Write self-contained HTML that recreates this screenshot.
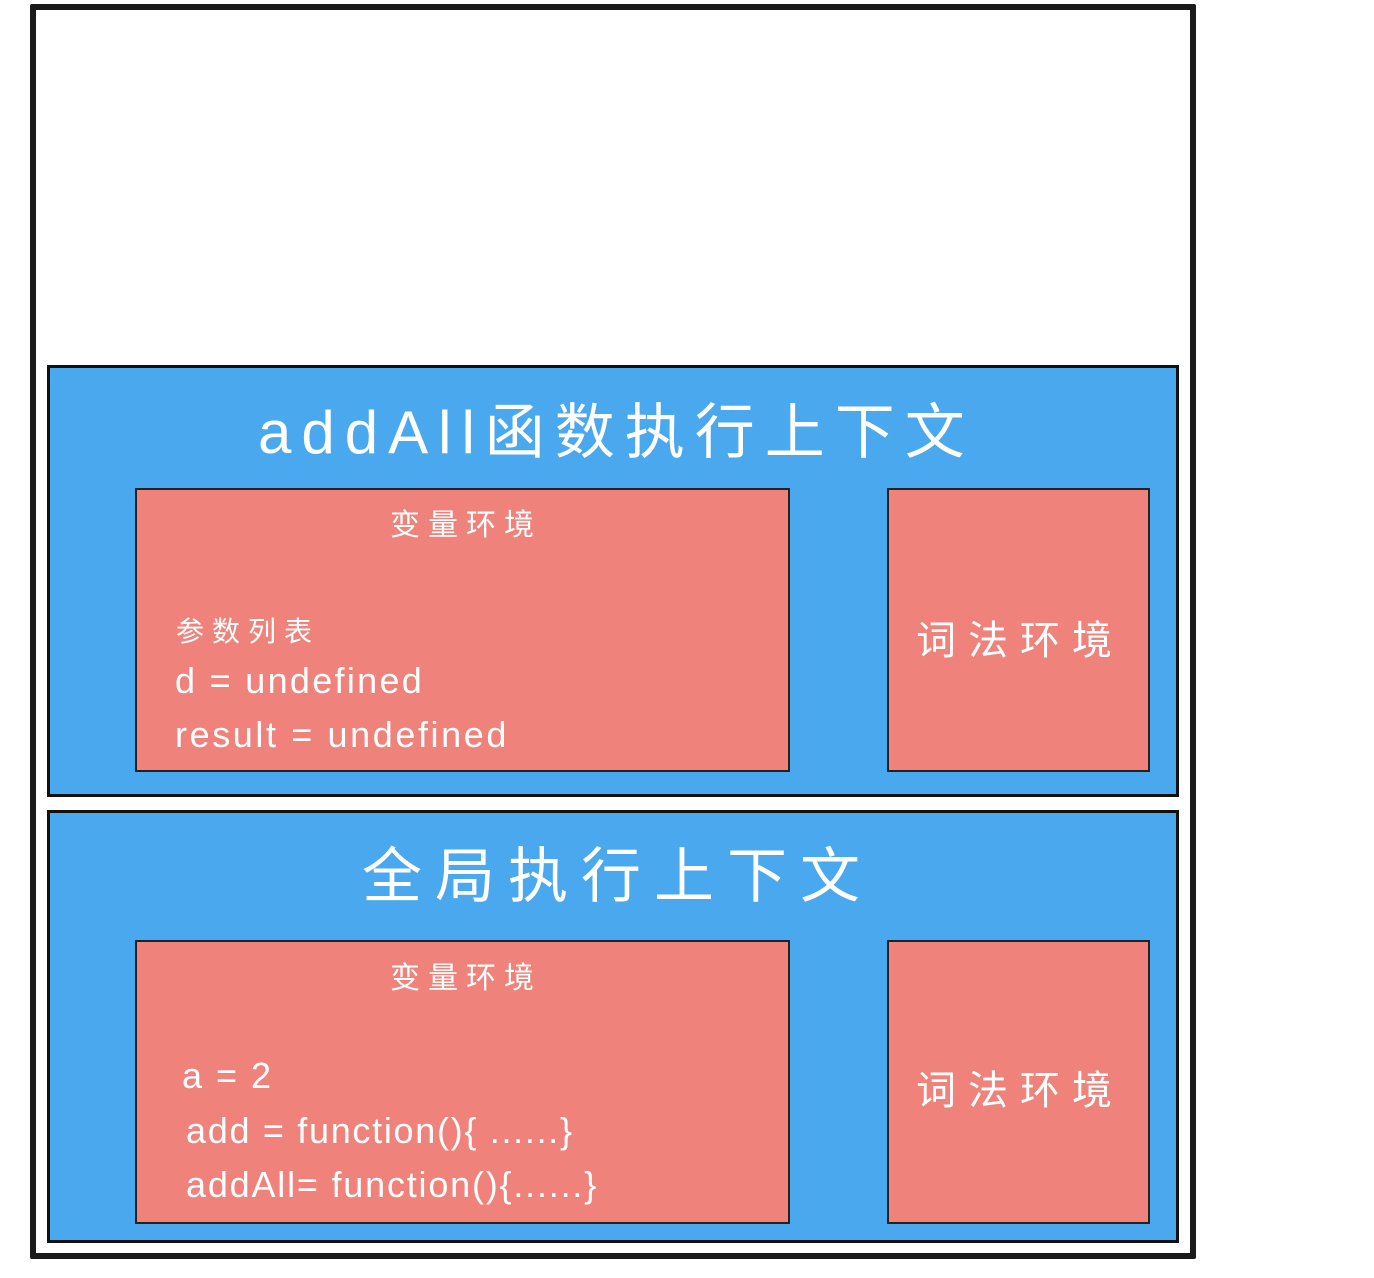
<!DOCTYPE html>
<html><head><meta charset="utf-8"><style>
body{margin:0;width:1374px;height:1278px;background:#fff;position:relative;overflow:hidden;font-family:"Liberation Sans","Noto Sans CJK SC",sans-serif}
.outer{position:absolute;left:30px;top:4px;width:1154px;height:1243px;border:6px solid #1a1a1a;border-radius:2px}
.blue{position:absolute;left:47px;width:1126px;background:#4aa8ee;border:3px solid #111}
.red{position:absolute;background:#ef837b;border:2px solid #222}
.t{position:absolute;color:#fff;white-space:nowrap}
</style></head><body>
<div class="outer"></div>
<div class="blue" style="top:365px;height:426px"></div>
<div class="blue" style="top:810px;height:427px"></div>
<div class="red" style="left:135px;top:488px;width:651px;height:280px"></div>
<div class="red" style="left:887px;top:488px;width:259px;height:280px"></div>
<div class="red" style="left:135px;top:940px;width:651px;height:280px"></div>
<div class="red" style="left:887px;top:940px;width:259px;height:280px"></div>
<div class="t" style="left:258px;top:384px;font-size:60px;letter-spacing:10px">addAll函数执行上下文</div>
<div class="t" style="left:362px;top:828px;font-size:60px;letter-spacing:13px">全局执行上下文</div>
<div class="t" style="left:390px;top:500px;font-size:30px;letter-spacing:8px">变量环境</div>
<div class="t" style="left:390px;top:953px;font-size:30px;letter-spacing:8px">变量环境</div>
<div class="t" style="left:176px;top:610px;font-size:28px;letter-spacing:8px">参数列表</div>
<div class="t" style="left:175px;top:660px;font-size:36px;letter-spacing:2.3px">d = undefined</div>
<div class="t" style="left:175px;top:714px;font-size:36px;letter-spacing:2.6px">result = undefined</div>
<div class="t" style="left:182px;top:1055px;font-size:36px;letter-spacing:2px">a = 2</div>
<div class="t" style="left:186px;top:1110px;font-size:36px;letter-spacing:1.7px">add = function(){ ......}</div>
<div class="t" style="left:186px;top:1164px;font-size:36px;letter-spacing:1.8px">addAll= function(){......}</div>
<div class="t" style="left:916px;top:608px;font-size:40px;letter-spacing:12px">词法环境</div>
<div class="t" style="left:916px;top:1058px;font-size:40px;letter-spacing:12px">词法环境</div>
</body></html>
